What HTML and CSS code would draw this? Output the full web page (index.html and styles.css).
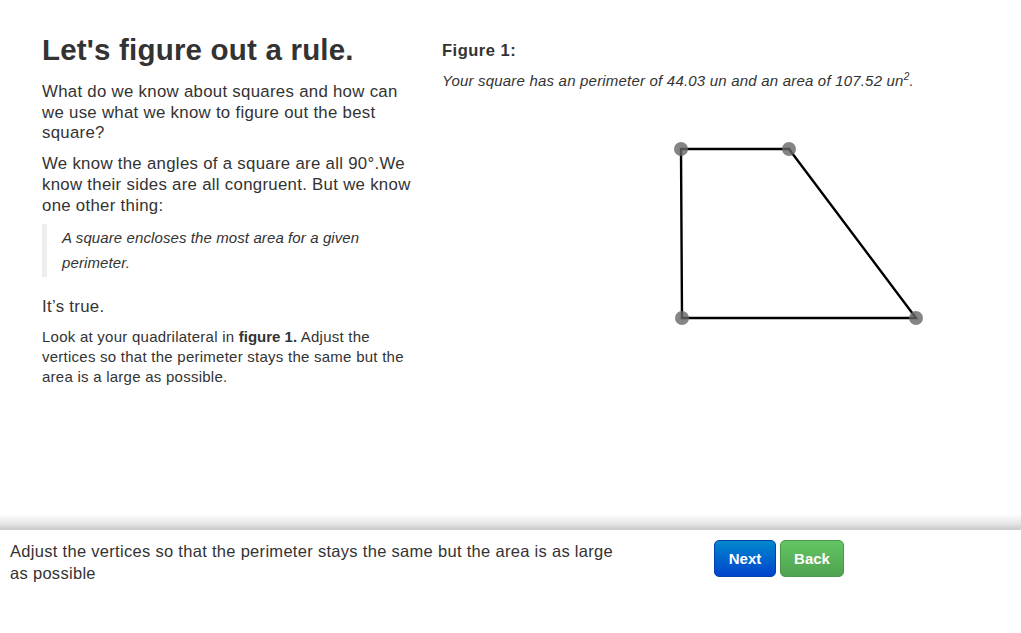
FILE: index.html
```html
<!DOCTYPE html>
<html>
<head>
<meta charset="utf-8">
<link rel="stylesheet" href="styles.css">
</head>
<body>
<div class="page">
  <main class="main">
    <section class="left">
      <h1 class="title">Let's figure out a rule.</h1>
      <p class="lead">What do we know about squares and how can we use what we know to figure out the best square?</p>
      <p class="lead">We know the angles of a square are all 90°.We know their sides are all congruent. But we know one other thing:</p>
      <blockquote class="quote"><p>A square encloses the most area for a given perimeter.</p></blockquote>
      <p class="lead">It’s true.</p>
      <p class="small">Look at your quadrilateral in <strong>figure 1.</strong> Adjust the vertices so that the perimeter stays the same but the area is a large as possible.</p>
    </section>
    <section class="right">
      <h4 class="fig-title">Figure 1:</h4>
      <p class="fig-caption">Your square has an perimeter of 44.03 un and an area of 107.52 un<sup>2</sup>.</p>
      <svg class="figure" width="500" height="250" viewBox="0 0 500 250">
        <polygon points="239,58 347,58 474,227 240,227" fill="none" stroke="#000" stroke-width="2.4" stroke-linejoin="miter"/>
        <circle cx="239" cy="58" r="7" fill="#666" fill-opacity="0.8"/>
        <circle cx="347" cy="58" r="7" fill="#666" fill-opacity="0.8"/>
        <circle cx="474" cy="227" r="7" fill="#666" fill-opacity="0.8"/>
        <circle cx="240" cy="227" r="7" fill="#666" fill-opacity="0.8"/>
      </svg>
    </section>
  </main>
  <div class="shade"></div>
  <footer class="footer">
    <p class="instructions">Adjust the vertices so that the perimeter stays the same but the area is as large as possible</p>
    <div class="buttons">
      <button class="btn btn-next">Next</button>
      <button class="btn btn-back">Back</button>
    </div>
  </footer>
</div>
</body>
</html>
```
FILE: styles.css
```css
html, body {
  margin: 0;
  padding: 0;
  background: #fff;
}
body {
  font-family: "Liberation Sans", Arial, sans-serif;
  color: #333;
}
.page {
  display: flex;
  flex-direction: column;
  height: 633px;
  overflow: hidden;
}
.main {
  flex: 1;
  display: flex;
  padding: 32px 0 0 42px;
}
.left {
  width: 372px;
}
.right {
  margin-left: 28px;
  padding-top: 8px;
}
.title {
  margin: 0 0 14px;
  font-size: 29.5px;
  line-height: 36px;
  font-weight: bold;
  color: #333;
  letter-spacing: 0.2px;
}
.lead {
  margin: 0 0 10px;
  font-size: 16.8px;
  line-height: 20.7px;
  letter-spacing: 0.3px;
}
.quote {
  margin: -2px 0 20px;
  padding: 1px 0 2px 15px;
  border-left: 5px solid #eee;
}
.quote p {
  margin: 0;
  font-size: 15px;
  line-height: 25px;
  font-style: italic;
  color: #333;
  letter-spacing: 0.1px;
}
.small {
  margin: -1px 0 0;
  font-size: 15px;
  line-height: 20px;
  letter-spacing: 0.25px;
}
.small strong {
  font-weight: bold;
  letter-spacing: 0;
}
.fig-title {
  margin: 0 0 11px;
  font-size: 16.5px;
  line-height: 20px;
  font-weight: bold;
  letter-spacing: 0.5px;
}
.fig-caption {
  margin: 0;
  font-size: 15px;
  line-height: 20px;
  font-style: italic;
  letter-spacing: 0.2px;
}
.fig-caption sup {
  font-size: 10px;
  line-height: 0;
}
.figure {
  display: block;
}
.shade {
  height: 16px;
  background: linear-gradient(to bottom, rgba(255,255,255,0) 0%, #e6e6e6 60%, #c8c8c8 100%);
}
.footer {
  height: 103px;
  display: flex;
  align-items: flex-start;
}
.instructions {
  width: 620px;
  margin: 0;
  padding: 10px 0 0 10px;
  font-size: 16.5px;
  line-height: 22px;
  letter-spacing: 0.3px;
  color: #333;
}
.buttons {
  display: flex;
  gap: 4px;
  margin: 10px 0 0 84px;
}
.btn {
  height: 37px;
  padding: 0;
  border-radius: 5px;
  font-family: "Liberation Sans", Arial, sans-serif;
  font-size: 15px;
  font-weight: bold;
  color: #fff;
  cursor: pointer;
}
.btn-next {
  width: 62px;
  background: linear-gradient(to bottom, #0088cc, #0044cc);
  border: 1px solid #0044aa;
}
.btn-back {
  width: 64px;
  background: linear-gradient(to bottom, #62c462, #51a351);
  border: 1px solid #4a9a4a;
}
```
